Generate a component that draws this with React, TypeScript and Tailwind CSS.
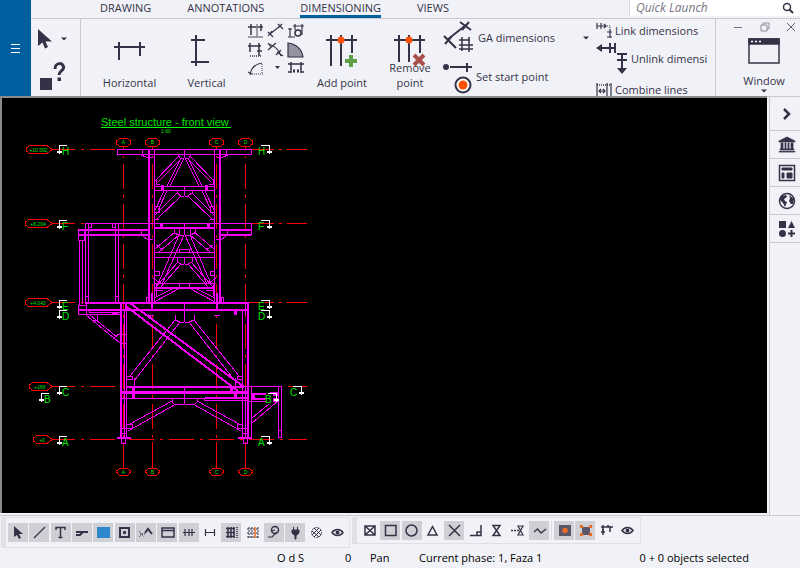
import React from "react";

type Part = { children?: React.ReactNode };

const Glyph: React.FC<Part & { w: number; h: number; className?: string }> = ({ w, h, className = "", children }) => (
  <svg width={w} height={h} viewBox={`0 0 ${w} ${h}`} fill="none" stroke="#353247" strokeWidth="1.5" className={`shrink-0 ${className}`} aria-hidden="true">
    {children}
  </svg>
);

const Caret: React.FC<{ className?: string }> = ({ className = "" }) => (
  <svg width="6" height="4" viewBox="0 0 6 4" className={`shrink-0 ${className}`} aria-hidden="true">
    <path d="M0 0.5H6L3 3.5Z" fill="#353247" />
  </svg>
);

const BigButton: React.FC<Part & { label: React.ReactNode; className?: string }> = ({ label, className = "", children }) => (
  <button type="button" className={`flex flex-col items-center pt-[15px] shrink-0 ${className}`}>
    {children}
    <span className="flex h-[22px] flex-col justify-end leading-[15px]">{label}</span>
  </button>
);

const smallTools: { name: string; art: React.ReactNode }[] = [
  { name: "Dimension to base line", art: <><path d="M1 4H16M4 1V12M14 1V8" /><path d="M10 1V14M1 14H16" stroke="#85838f" /></> },
  { name: "Free dimension", art: <path d="M3 11L13 3M11 1L16 6M15 1L11 5M1 9L6 14M5 8L1 13" strokeWidth="1.2" /> },
  { name: "Elevation dimension", art: <><path d="M6 3H17M8 1V7M15 1V12M3 5V14M1 6H5M1 14H8" strokeWidth="1.2" /><circle cx="11" cy="10" r="3" /></> },
  { name: "Orthogonal dimension", art: <><path d="M1 4H14M3 1V10M12 1V14M10 9H15" /><path d="M3 14H14" strokeDasharray="1 1" /></> },
  { name: "Perpendicular dimension", art: <path d="M2 2C8 4 12 8 14 14M1 8L9 1M9 13L14 8M1 1L4 5M10 10L16 14" strokeWidth="1.2" /> },
  { name: "Angle dimension", art: <path d="M1 1V15H16C15 7 9 2 1 1Z" fill="#9493a0" strokeWidth="1.2" /> },
  { name: "Radius dimension", art: <><path d="M3 14C4 7 8 3 15 2M1 11L5 13" strokeWidth="1.2" /><path d="M5 13H16M15 3V13" strokeDasharray="1 1" strokeWidth="1" /></> },
  { name: "More dimension types", art: <path d="M8 5H13L10.500 8Z" fill="#353247" stroke="none" /> },
  { name: "Dimension with tags", art: <><path d="M1 3H17M4 1V12M14 1V12M1 11H4M14 11H17" /><path d="M6 10H8M10 10H12" strokeWidth="3" /></> },
];

const Ribbon = () => (
  <div className="flex h-[79px] border-y border-[#c9cad0] overflow-hidden">
    <div className="w-[50px] shrink-0 border-r border-[#c9cad0] flex flex-col pt-2">
      <button type="button" aria-label="Select" className="flex items-center h-6 pl-[6px]">
        <Glyph w={18} h={22}><path d="M1 1V18L5.500 14.500L8 20.500L11 19L8.500 13.500H15Z" fill="#353247" stroke="none" /></Glyph>
        <Caret className="ml-[6px]" />
      </button>
      <button type="button" aria-label="Inquire objects" className="mt-[10px] pl-[9px]">
        <Glyph w={28} h={30}>
          <path d="M0 17H12V29H0Z" fill="#353247" stroke="none" />
          <path d="M15 8C15 1 24 1 23.500 7C23 10 19 10 19 14" strokeWidth="3" />
          <path d="M17.500 16.500H21V20H17.500Z" fill="#353247" stroke="none" />
        </Glyph>
      </button>
    </div>

    <BigButton label="Horizontal" className="w-[77px] ml-[10px]">
      <Glyph w={32} h={34}><path d="M0 13H31M5 8V26M26 8V22" strokeWidth="2" /></Glyph>
    </BigButton>
    <BigButton label="Vertical" className="w-[77px]">
      <Glyph w={32} h={34}><path d="M5 1V32M0 6H14M0 28H18" strokeWidth="2" /></Glyph>
    </BigButton>

    <div className="grid grid-cols-3 gap-x-[2px] gap-y-[3px] content-start pt-1 ml-[2px] shrink-0">
      {smallTools.map((tool) => (
        <button key={tool.name} type="button" aria-label={tool.name}>
          <Glyph w={18} h={16}>{tool.art}</Glyph>
        </button>
      ))}
    </div>

    <BigButton label="Add point" className="w-[66px] ml-1">
      <Glyph w={32} h={34}>
        <path d="M0 6H31M5 1V32M15 1V32M26 1V19" strokeWidth="2" />
        <circle cx="15" cy="6" r="3.500" fill="#ff5206" stroke="none" />
        <path d="M25 21V33M19 27H31" stroke="#5f9f47" strokeWidth="4" />
      </Glyph>
    </BigButton>
    <BigButton label={<><span>Remove</span><span>point</span></>} className="w-[66px] ml-[2px]">
      <Glyph w={32} h={34}>
        <path d="M0 6H31M5 1V28M15 1V28M26 1V19" strokeWidth="2" />
        <circle cx="15" cy="6" r="3.500" fill="#ff5206" stroke="none" />
        <path d="M20 21L30 31M30 21L20 31" stroke="#a9504a" strokeWidth="4" />
      </Glyph>
    </BigButton>

    <div className="flex flex-col w-[146px] shrink-0">
      <button type="button" className="flex items-center gap-px h-[39px]">
        <Glyph w={34} h={34}>
          <path d="M4 19L23 4M17 1L28 9M26 1L19 9M1 15L13 27M9 15L2 23" strokeWidth="2" />
          <path d="M16 19H27M16 24H30M16 28H30M19 16V30M26 16V31" strokeWidth="1.500" />
        </Glyph>
        GA dimensions
        <Caret className="ml-auto" />
      </button>
      <button type="button" className="flex items-center h-[39px]">
        <Glyph w={33} h={34}>
          <circle cx="3" cy="7" r="3" fill="#353247" stroke="none" />
          <path d="M7 7H29M24 3V12" strokeWidth="2" />
          <circle cx="20" cy="25" r="7.500" strokeWidth="2" fill="#fff" />
          <circle cx="20" cy="25" r="4.500" fill="#ff5206" stroke="none" />
        </Glyph>
        Set start point
      </button>
    </div>

    <div className="flex flex-col flex-1 min-w-0 pl-[7px] whitespace-nowrap">
      <button type="button" className="flex shrink-0 items-center gap-[3px] h-6">
        <Glyph w={16} h={18}>
          <path d="M1 4H10M1 1V7M5 1V7M8 2L10 4L8 6M14 7V16M11 10H16M11 15H16" strokeWidth="1.200" />
          <path d="M11 4H14V7" strokeDasharray="1 1" strokeWidth="1" />
        </Glyph>
        Link dimensions
      </button>
      <button type="button" className="flex shrink-0 items-center gap-1 h-8">
        <Glyph w={31} h={34}>
          <path d="M0 6L6 2V10Z" fill="#353247" stroke="none" />
          <path d="M5 6H20M14 1V11M19 1V11M26 12V27M21 12H31M21 18H31" strokeWidth="2" />
          <path d="M21 26H31L26 32Z" fill="#353247" stroke="none" />
        </Glyph>
        Unlink dimensi
      </button>
      <button type="button" className="flex shrink-0 items-center gap-[3px] h-[30px]">
        <Glyph w={16} h={17}>
          <path d="M1 1V17M11 1V17M15 1V17M3 9H9M5 7L3 9L5 11M7 7L9 9L7 11" strokeWidth="1.200" />
          <path d="M1 3H15" strokeDasharray="1 1" />
        </Glyph>
        Combine lines
      </button>
    </div>

    <div className="w-[85px] shrink-0 border-l border-[#c9cad0] flex flex-col">
      <div className="flex justify-between pl-[17px] pr-1 pt-[3px]">
        <button type="button" aria-label="Minimize"><Glyph w={10} h={10}><path d="M1 5.500H9" stroke="#777583" strokeWidth="1" /></Glyph></button>
        <button type="button" aria-label="Restore"><Glyph w={10} h={10}><path d="M1 3H7V9H1ZM3 3V1H9V7H7" stroke="#8f8d99" strokeWidth="1" /></Glyph></button>
        <button type="button" aria-label="Close"><Glyph w={10} h={10}><path d="M1 1L9 9M9 1L1 9" stroke="#62606f" strokeWidth="1" /></Glyph></button>
      </div>
      <button type="button" className="flex flex-col items-center pl-3 pt-[6px]">
        <Glyph w={32} h={28}>
          <path d="M1 1H31V25H1Z" />
          <path d="M1 1H31V6H1Z" fill="#353247" />
          <path d="M3 3.500H5M7 3.500H9M11 3.500H13" stroke="#fff" />
        </Glyph>
        <span className="mt-[7px] leading-4">Window</span>
        <Caret />
      </button>
    </div>
  </div>
);

const Header = () => (
  <header className="flex text-[#353247] text-[11px]">
    <button type="button" aria-label="Menu" className="w-[31px] shrink-0 bg-[#005f9e] flex items-center justify-center">
      <Glyph w={9} h={9}><path d="M0 0.500H9M0 4.500H9M0 8.500H9" stroke="#fff" strokeWidth="1" /></Glyph>
    </button>
    <div className="flex-1 min-w-0">
      <div className="flex h-[18px] items-start">
        <nav className="flex pl-[69px] leading-4 gap-9">
          <a href="#drawing">DRAWING</a>
          <a href="#annotations">ANNOTATIONS</a>
          <a href="#dimensioning" className="border-b-3 border-[#005f9e] leading-[15px]">DIMENSIONING</a>
          <a href="#views">VIEWS</a>
        </nav>
        <label className="ml-auto flex w-[171px] h-4 items-center bg-white border-l border-[#dcdde2] pl-[6px] pr-[6px]">
          <input type="text" aria-label="Quick Launch" placeholder="Quick Launch" className="min-w-0 flex-1 text-[12px] italic outline-none placeholder:text-[#777583]" />
          <Glyph w={12} h={12}><circle cx="5" cy="5" r="3.500" /><path d="M7.500 7.500L11 11" strokeWidth="2" /></Glyph>
        </label>
      </div>
      <Ribbon />
    </div>
  </header>
);

// Left half of a symmetric brace set; drawn again mirrored about the frame axis.
const halfBraces = [
  "M178 155L180 158H184M179 156L155 181M182 158L158 182M156 179V184H160M181 158L167 186M184 158L170 186",
  "M184 196H181L177 193V191M177 193L155 215M181 196L157 219M164 191L155 210M167 191L158 210M154 206H159V212H154M154 219H159",
  "M174 229V233L179 235H184M175 232L155 249M179 235L159 252M156 245L163 250M179 235L158 284M184 235L162 284",
  "M177 257V262L181 264H184M178 262L156 287M181 264L160 288M154 271H159V275H154M153 278L160 283",
  "M179 229V235M174 288L154 298M180 288L154 302M155 290H163M156 284V296M148 303V297H146V303",
  "M175 315V320L180 322H184M175 320L130 376M180 322L134 381M126 376H132V379H126M134 378V386",
  "M172 398V402L174 404H184M172 401L128 425M176 404L128 431M126 424H132V428H126M121 428H127M121 433H127",
];

const bigAxes = [123.5, 152.5, 216.5, 245.5];
const levels = [
  { y: 149.5, x: 26, text: "+10.592", tail: true },
  { y: 223.5, x: 25, text: "+8.204", tail: false },
  { y: 302.5, x: 25, text: "+4.042", tail: false },
  { y: 386.5, x: 29, text: "+166", tail: true },
  { y: 439.5, x: 33, text: "+0", tail: true },
];
const cuts = [
  { x: 59, y: 145, flip: false, name: "H" },
  { x: 59, y: 220, flip: false, name: "F" },
  { x: 59, y: 300, flip: false, name: "E" },
  { x: 59, y: 310, flip: false, name: "D" },
  { x: 59, y: 386, flip: false, name: "C" },
  { x: 41, y: 393, flip: false, name: "B" },
  { x: 59, y: 436, flip: false, name: "A" },
  { x: 269, y: 145, flip: true, name: "H" },
  { x: 269, y: 220, flip: true, name: "F" },
  { x: 269, y: 300, flip: true, name: "E" },
  { x: 269, y: 310, flip: true, name: "D" },
  { x: 301, y: 386, flip: true, name: "C" },
  { x: 276, y: 393, flip: true, name: "B" },
  { x: 269, y: 436, flip: true, name: "A" },
];

const StructureDrawing = () => (
  <svg width="320" height="390" viewBox="2 98 320 390" fill="none" shapeRendering="crispEdges" role="img" aria-label="Steel structure front view" className="font-['Liberation_Sans',sans-serif]">
    <g stroke="#f00">
      {bigAxes.map((x) => (
        <g key={x}>
          <path d={`M${x} 147V150M${x} 156V158`} />
          <path d={`M${x} 164V438`} strokeDasharray="25 6 3 6" />
          <path d={`M${x} 442V468`} />
          <path d={`M${x - 4} 138.500H${x + 4}L${x + 7} 141V144L${x + 4} 146.500H${x - 4}L${x - 7} 144V141Z`} />
          <path d={`M${x - 4} 468.500H${x + 4}L${x + 7} 471V472L${x + 4} 475.500H${x - 4}L${x - 7} 472V471Z`} />
        </g>
      ))}
      {levels.map((l) => (
        <g key={l.y}>
          <path d={`M${l.x + 4} ${l.y - 4}H47L51 ${l.y - 1}V${l.y + 1}L47 ${l.y + 4}H${l.x + 4}L${l.x} ${l.y + 1}V${l.y - 1}Z`} />
          <path d={`M51 ${l.y}H75M81 ${l.y}H84`} />
          {l.tail && <path d={`M90 ${l.y}H115`} />}
        </g>
      ))}
      <path d="M252 149.500H274M279 149.500H282M287 149.500H307M251 223.500H274M279 223.500H282M287 223.500H307M249 302.500H274M279 302.500H282M287 302.500H307M288 386.500H307" />
      <path d="M129 439.500H307" strokeDasharray="25 6 3 6" />
    </g>

    <g stroke="#f0f">
      <path d="M117.500 149.500H251.500V154.500H117.500ZM142.500 149V155M226.500 149V155M184.500 149V158M141 155L147 157.500H153M228 155L222 157.500H217" />
      <path d="M154.500 149V303M214.500 149V303M154 186.500H214M154 190.500H214M184.500 186V196M85 223.500H251.500V235M154 252.500H214M154 257.500H214M154 283.500H214M179.500 252V249.500H189.500V252" />
      <path d="M149 149V303M220 149V303M154 228H214M154 288H214M78 230H148M78 235H148M221 230H251M221 235H251" strokeWidth="2" />
      <path d="M162 185V191M206 185V191M161 223V229M208 223V229" strokeWidth="3" />
      <path d="M141.500 230V235L147 239H153M227.500 230V235L222 239H216M184.500 223V235M184.500 257V264M179.500 283V288M189.500 283V288" />
      <path d="M85.500 223V303M88.500 223V303M115.500 223V303M118.500 223V303M79.500 240V306M82.500 240V304M78.500 229.500H84.500V240.500H78.500ZM91.500 224V227.500H88M112.500 224V227.500H115M85 296.500H88M115 296.500H118" />
      <path d="M85 303H249M78 310H249M152 293V310M217 293V310" strokeWidth="2" />
      <path d="M78.500 305.500H86.500V314.500H78.500ZM78 314.500H120M89 310V312.500H120M112 313.500H118M86 303V310M148 315.500H154M214 315.500H220M184.500 303V322" />
      <path d="M235.500 310V315" strokeWidth="3" />
      <path d="M86 315L120 343M90 315L117 337M97 315V321L92 320M115 337L120 334M113 339L118 334M120 343H127M120 334H127" />
      <path d="M121 304V439M248 303V439" strokeWidth="2" />
      <path d="M124.500 310V439M126.500 303V439M242.500 310V439M245.500 303V315M245.500 386V439" />
      <path d="M130 303L244 387M127 307L238 391M126 303V309M148 315L153 320" strokeWidth="2" />
      <path d="M127 387H243M205 398H248" strokeWidth="2" />
      <path d="M121 392.500H248M133.500 387V399M231.500 387V392M235.500 391V399" strokeWidth="3" />
      <path d="M121 398.500H248M184.500 388V404M204.500 398V400.500H248M243 386.500H281.500V438M278.500 387V438M251.500 386V437M251 437.500H248M278 437.500H282M278 430.500H282M248 401.500H278M252 418L275 399M252 423L278 401" />
      <path d="M252 394H266M252 399H278M117 438H131M238 438H252" strokeWidth="2" />
      <path d="M252 396H255M270 394H278" strokeWidth="4" />
      <path d="M121.500 439V443.500H125.500V439M243.500 439V443.500H247.500V439" />
      {halfBraces.map((d) => (
        <g key={d}>
          <path d={d} />
          <path d={d} transform="translate(369 0) scale(-1 1)" />
        </g>
      ))}
    </g>

    <path d="M101 127.500H231" stroke="#0f0" />
    <g fill="#00e000">
      <text x="101" y="126" fontSize="11">Steel structure - front view</text>
      <text x="161" y="133" fontSize="5">1:60</text>
      {["A", "B", "C", "D"].map((name, i) => (
        <g key={name} fontSize="5" textAnchor="middle">
          <text x={bigAxes[i]} y="144">{name}</text>
          <text x={bigAxes[i]} y="474">{name}</text>
        </g>
      ))}
      {levels.map((l) => (
        <text key={l.y} x={(l.x + 51) / 2} y={l.y + 2} fontSize="5" textAnchor="middle">{l.text}</text>
      ))}
    </g>

    <path d="M266 394H273V404H266Z" fill="#000" />
    {cuts.map((c) => {
      const dir = c.flip ? -1 : 1;
      return (
        <g key={`${c.name}${c.x}`}>
          <path d={`M${c.x + dir * 8} ${c.y + 0.5}H${c.x + 0.5}V${c.y + 9}`} stroke="#fff" />
          <path d={`M${c.x - 2} ${c.y + 6}H${c.x + 3}V${c.y + 8}H${c.x - 2}Z`} fill="#fff" />
          <text x={c.flip ? c.x - 11 : c.x + 3} y={c.y + 10} fontSize="10" fill="#00e000">{c.name}</text>
        </g>
      );
    })}
  </svg>
);

const SideBar = () => (
  <aside className="w-[31px] shrink-0 border-l border-[#c9cad0] bg-[#f1f2f7] flex flex-col">
    {[
      { name: "Expand", art: <path d="M6 4L11 9L6 14" strokeWidth="2.500" /> },
      { name: "Applications and components", art: <path d="M9 1L17 5V6H1V5ZM3 7H5V13H3ZM7 7H8V13H7ZM10 7H11V13H10ZM13 7H15V13H13ZM2 13H16V14H2ZM1 15.500H17V16H1Z" fill="#353247" strokeWidth="0.800" /> },
      { name: "Properties", art: <><path d="M1.500 1.500H16.500V16.500H1.500Z" /><path d="M4 4H14V6H4ZM4 9H6V14H4ZM9 9H14V14H9Z" fill="#353247" strokeWidth="1" /></> },
      { name: "Online", art: <><circle cx="9" cy="9" r="7.500" /><path d="M3 4L8 3L9 5L6 7L7 9L9 10L7 15L5 11L2 8ZM11 3L16 7L15 12L13 12L11 9L12 6Z" fill="#353247" stroke="none" /></> },
      { name: "Component catalog", art: <path d="M1 1H8V8H1ZM10 8H17L13.500 1ZM12.500 10H14.500V12.500H17V14.500H14.500V17H12.500V14.500H10V12.500H12.500ZM4.500 10A3.500 3.500 0 1 1 4.500 17A3.500 3.500 0 1 1 4.500 10Z" fill="#353247" stroke="none" /> },
    ].map((item, i) => (
      <button key={item.name} type="button" aria-label={item.name} className={`flex items-center justify-center pl-1 border-b border-[#c9cad0] ${i === 0 ? "h-[34px]" : "h-[28px]"}`}>
        <Glyph w={18} h={18}>{item.art}</Glyph>
      </button>
    ))}
  </aside>
);

type Tool = { name: string; on: boolean; art: React.ReactNode };

const selectTools: Tool[] = [
  { name: "Select all", on: true, art: <path d="M3 1V12L6 10L8 14L10 13L8 9H12Z" fill="#353247" stroke="none" /> },
  { name: "Select lines", on: true, art: <path d="M2 13L13 2" strokeWidth="1.200" /> },
  { name: "Select text", on: true, art: <path d="M3 5V2.500H12V5M7.500 2.500V12.500M5.500 12.500H9.500" /> },
  { name: "Select marks", on: true, art: <path d="M2 10H6L9 7M2 7H14" strokeWidth="2" /> },
  { name: "Select parts", on: true, art: <path d="M1 2H14V13H1Z" fill="#2b88cb" stroke="none" /> },
  { name: "Select section marks", on: true, art: <><path d="M3 3H12V12H3Z" strokeWidth="2" /><path d="M6.500 6.500H8.500V8.500H6.500Z" fill="#353247" strokeWidth="1" /></> },
  { name: "Select welds", on: true, art: <><path d="M7 8L10 4L14 9" strokeWidth="2" /><path d="M1 6L6 12M1 12L5 8M2 9H7" strokeWidth="1" strokeDasharray="1 1" /></> },
  { name: "Select views", on: true, art: <path d="M2 3H14V12H2ZM2 5.500H14" /> },
  { name: "Select dimensions", on: true, art: <path d="M2 7.500H14M4 4V11M8 4V11M11 4V11" strokeWidth="1.200" /> },
  { name: "Select single dimensions", on: false, art: <path d="M3 7.500H13M3.500 4V11M12.500 4V11" strokeWidth="1.200" /> },
  { name: "Select grids", on: true, art: <><path d="M2 3.500H11M2 7.500H11M2 11.500H11M4 2V13M7 2V13M10 2V13" /><path d="M13 2V13" strokeDasharray="1 1" /></> },
  { name: "Select grid line", on: false, art: <><path d="M2 4H13M2 8H13M2 12H13M4 2V13M7 2V13M13 2V13" strokeWidth="1" strokeDasharray="2 1" /><path d="M10 2V13" stroke="#ed6b25" /></> },
  { name: "Select detail marks", on: true, art: <><circle cx="9" cy="5" r="3.500" /><path d="M2 12H6L11 7M6 6L9 5" strokeWidth="1.200" /></> },
  { name: "Select plug-ins", on: true, art: <path d="M4 5H11V8L9 10H8V14H7V10H6L4 8ZM5.500 2V5M9.500 2V5" fill="#353247" strokeWidth="1" /> },
  { name: "Select hatches", on: false, art: <><circle cx="7.500" cy="7.500" r="5" strokeWidth="1" strokeDasharray="2 1" /><path d="M3 6L10 12M5 3L12 10M3 10L10 3M5 12L12 5" strokeWidth="1" /></> },
  { name: "Selection visibility", on: false, art: <><path d="M2 7.500C5 3.500 10 3.500 13 7.500C10 11.500 5 11.500 2 7.500Z" /><circle cx="7.500" cy="7.500" r="2" fill="#353247" stroke="none" /></> },
];

const snapTools: Tool[] = [
  { name: "Snap to reference points", on: false, art: <path d="M3 3H13V12H3ZM3 3L13 12M13 3L3 12" /> },
  { name: "Snap to end points", on: true, art: <path d="M2.500 2.500H13V12.500H2.500Z" /> },
  { name: "Snap to centers", on: true, art: <circle cx="7.500" cy="7.500" r="5.500" /> },
  { name: "Snap to midpoints", on: false, art: <path d="M7.500 3.500L12 12H3Z" /> },
  { name: "Snap to intersections", on: true, art: <path d="M2 2L13 13M13 2L2 13" /> },
  { name: "Snap to perpendicular", on: false, art: <path d="M2 12.500H13V2M9 12V9H13" /> },
  { name: "Snap to nearest", on: false, art: <path d="M4 2.500H11L4 12.500H11Z" /> },
  { name: "Snap to extension", on: false, art: <><path d="M8 3H13L8 12H13Z" strokeWidth="1.200" /><path d="M1 7.500H9" strokeDasharray="2 1" /></> },
  { name: "Snap to any position", on: true, art: <path d="M2 9L5.500 6L9 10L14 6" strokeWidth="1.300" /> },
];

const trailingTools: Tool[] = [
  { name: "Snap to model", on: true, art: <><path d="M2 2H14V13H2Z" fill="#595769" stroke="none" /><circle cx="8" cy="7.500" r="2.700" fill="#ed6b25" stroke="none" /></> },
  { name: "Snap to geometry", on: true, art: <><path d="M4 4H12V12H4Z" fill="#595769" stroke="none" /><path d="M2 2H5V5H2ZM11 2H14V5H11ZM2 10H5V13H2ZM11 10H14V13H11Z" fill="#ed6b25" stroke="none" /></> },
  { name: "Snap to dimensions", on: false, art: <path d="M2 4H14M4 2V12M11 3V9M2 9H6M8 3H10M3 7H5" /> },
  { name: "Snap visibility", on: false, art: selectTools[15].art },
];

const ToolRow: React.FC<{ tools: Tool[]; className: string }> = ({ tools, className }) => (
  <div className={`flex justify-between ${className}`}>
    {tools.map((tool) => (
      <button key={tool.name} type="button" aria-label={tool.name} aria-pressed={tool.on} className={`w-5 h-[19px] flex items-center justify-center ${tool.on ? "bg-[#cfd0d6]" : ""}`}>
        <Glyph w={15} h={15}>{tool.art}</Glyph>
      </button>
    ))}
  </div>
);

const Footer = () => (
  <footer className="border-t border-[#c9cad0] text-black text-[11px]">
    <div className="flex items-start gap-[2px] pt-px pl-px">
      <div className="flex border border-[#e0e1e6] border-l-[5px] py-[5px] pl-[2px] pr-px">
        <ToolRow tools={selectTools} className="w-[340px]" />
      </div>
      <div className="flex gap-[2px] border border-[#e0e1e6] border-l-[5px] py-[3px] pl-[2px] pr-[2px]">
        <ToolRow tools={snapTools} className="w-[190px]" />
        <div className="w-px bg-[#dcdde2]" />
        <ToolRow tools={trailingTools} className="w-[84px]" />
      </div>
    </div>
    <div className="flex h-5 items-center pl-[277px] pr-[51px] whitespace-pre">
      <span className="w-[68px]">O d S</span>
      <span className="w-[25px]">0</span>
      <span className="w-[49px]">Pan</span>
      <span>Current phase: 1, Faza 1</span>
      <span className="ml-auto">0 + 0 objects selected</span>
    </div>
  </footer>
);

export default function App() {
  return (
    <div className="flex min-h-screen flex-col bg-[#f1f2f7] font-['Open_Sans','Noto_Sans',sans-serif]">
      <Header />
      <main className="flex flex-1">
        <div className="flex-1 min-w-0 bg-black border-t-2 border-l-2 border-[#8b8b8f] mr-[2px] mb-[2px] -mt-px">
          <StructureDrawing />
        </div>
        <SideBar />
      </main>
      <Footer />
    </div>
  );
}
